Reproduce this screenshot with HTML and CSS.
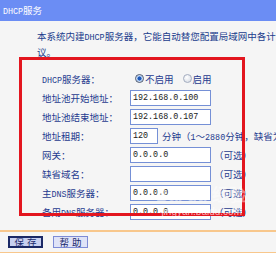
FILE: index.html
```html
<!DOCTYPE html>
<html lang="zh-CN">
<head>
<meta charset="utf-8">
<title>DHCP服务</title>
<link rel="stylesheet" href="styles.css">
</head>
<body>
<div class="page">
  <div class="header"><span class="en">DHCP</span>服务</div>
  <p class="intro">本系统内建<span class="en">DHCP</span>服务器，它能自动替您配置局域网中各计算机的<span class="en">TCP/IP</span>协<br>议。</p>
  <div class="form">
    <div class="row">
      <span class="label"><span class="en">DHCP</span>服务器：</span>
      <span class="field radios">
        <span class="radio on"></span><span class="opt">不启用</span>
        <span class="radio"></span><span class="opt">启用</span>
      </span>
    </div>
    <div class="row">
      <span class="label">地址池开始地址：</span>
      <span class="field"><span class="inp">192.168.0.100</span></span>
    </div>
    <div class="row">
      <span class="label">地址池结束地址：</span>
      <span class="field"><span class="inp">192.168.0.107</span></span>
    </div>
    <div class="row">
      <span class="label">地址租期：</span>
      <span class="field"><span class="inp short">120</span><span class="note">分钟（<span class="en">1</span>～<span class="en">2880</span>分钟，缺省为<span class="en">7200</span>分钟）</span></span>
    </div>
    <div class="row">
      <span class="label">网关：</span>
      <span class="field"><span class="inp">0.0.0.0</span><span class="opt-note">（可选）</span></span>
    </div>
    <div class="row">
      <span class="label">缺省域名：</span>
      <span class="field"><span class="inp"></span><span class="opt-note">（可选）</span></span>
    </div>
    <div class="row">
      <span class="label">主<span class="en">DNS</span>服务器：</span>
      <span class="field"><span class="inp">0.0.0.0</span><span class="opt-note">（可选）</span></span>
    </div>
    <div class="row">
      <span class="label">备用<span class="en">DNS</span>服务器：</span>
      <span class="field"><span class="inp">0.0.0.0</span><span class="opt-note">（可选）</span></span>
    </div>
  </div>
  <div class="footer">
    <button class="btn primary">保存</button>
    <button class="btn">帮助</button>
  </div>
  <div class="annot"></div>
  <div class="wm"><span class="wm-big">Bai<span class="wm-gap"></span>du 经验</span><span class="wm-url">jingyan.baidu.com</span></div>
</div>
</body>
</html>
```

FILE: styles.css
```css
html, body {
  margin: 0;
  padding: 0;
}
body {
  background: #f5f5f5;
  font-family: "Noto Sans CJK SC", "Noto Sans", sans-serif;
  font-size: 9.5px;
  color: #1f3b8f;
}
.page {
  position: relative;
  width: 276px;
  height: 253px;
  overflow: hidden;
}
.en {
  font-family: "Liberation Mono", monospace;
  font-size: 8.4px;
}
.header {
  height: 21px;
  line-height: 21px;
  background: #6b8df4;
  color: #ffffff;
  padding-left: 3px;
  white-space: nowrap;
}
.intro {
  margin: 8px 0 0 0;
  padding-left: 37px;
  line-height: 14px;
  white-space: nowrap;
  color: #203c8c;
}
.form {
  padding: 10px 0 0 42px;
}
.row {
  display: grid;
  grid-template-columns: 88px 1fr;
  align-items: center;
  height: 19px;
  white-space: nowrap;
}
.field {
  display: flex;
  align-items: center;
}
.radios {
  padding-left: 5px;
}
.radio {
  width: 9px;
  height: 9px;
  box-sizing: border-box;
  border-radius: 50%;
  border: 1px solid #a3acbf;
  background: radial-gradient(circle at 40% 35%, #ffffff 0%, #dfe3ea 70%);
}
.radio.on {
  border-color: #4a5770;
  background: radial-gradient(circle, #1c58b8 0 1.8px, #9fc0ef 2.2px 2.8px, #e8eef8 3.2px);
}
.opt {
  margin-left: 1px;
  margin-right: 9px;
}
.inp {
  display: flex;
  align-items: center;
  box-sizing: border-box;
  width: 81px;
  height: 16px;
  border: 1px solid #7590d6;
  background: #ffffff;
  padding: 0 2px;
  font-family: "Liberation Mono", monospace;
  font-size: 8.4px;
  color: #1a1a1a;
}
.inp.short {
  width: 28px;
}
.note {
  margin-left: 4px;
}
.opt-note {
  margin-left: 3px;
}
.footer {
  margin-top: 9px;
  border-top: 2px solid #f8c78c;
  border-bottom: 2px solid #f8c78c;
  padding: 4px 8px;
  display: flex;
  gap: 10px;
}
.btn {
  box-sizing: border-box;
  height: 12px;
  width: 35px;
  padding: 0 0 0 3px;
  margin: 0;
  font-family: "Noto Sans CJK SC", sans-serif;
  font-size: 9.5px;
  line-height: 8px;
  letter-spacing: 3px;
  color: #1a2a6c;
  background: #dfe3f7;
  border: 1px solid #7d8bd6;
  display: flex;
  align-items: center;
  justify-content: center;
}
.btn.primary {
  border: 2px solid #1b2966;
  background: #c8d0f0;
}
.annot {
  position: absolute;
  left: 19px;
  top: 57px;
  width: 226px;
  height: 159px;
  box-sizing: border-box;
  border: 3px solid #e3161f;
  pointer-events: none;
}
.wm {
  position: absolute;
  left: 96px;
  top: 186px;
  width: 150px;
  display: flex;
  flex-direction: column;
  align-items: flex-end;
  color: rgba(255, 255, 255, 0.55);
  pointer-events: none;
  white-space: nowrap;
  font-family: "Liberation Sans", sans-serif;
}
.wm-big {
  font-size: 17px;
  font-weight: bold;
  line-height: 20px;
  color: rgba(255, 255, 255, 0.45);
}
.wm-gap {
  display: inline-block;
  width: 4px;
}
.wm-url {
  font-size: 10px;
  line-height: 11px;
  margin-right: 4px;
  color: rgba(255, 255, 255, 0.7);
}
```
